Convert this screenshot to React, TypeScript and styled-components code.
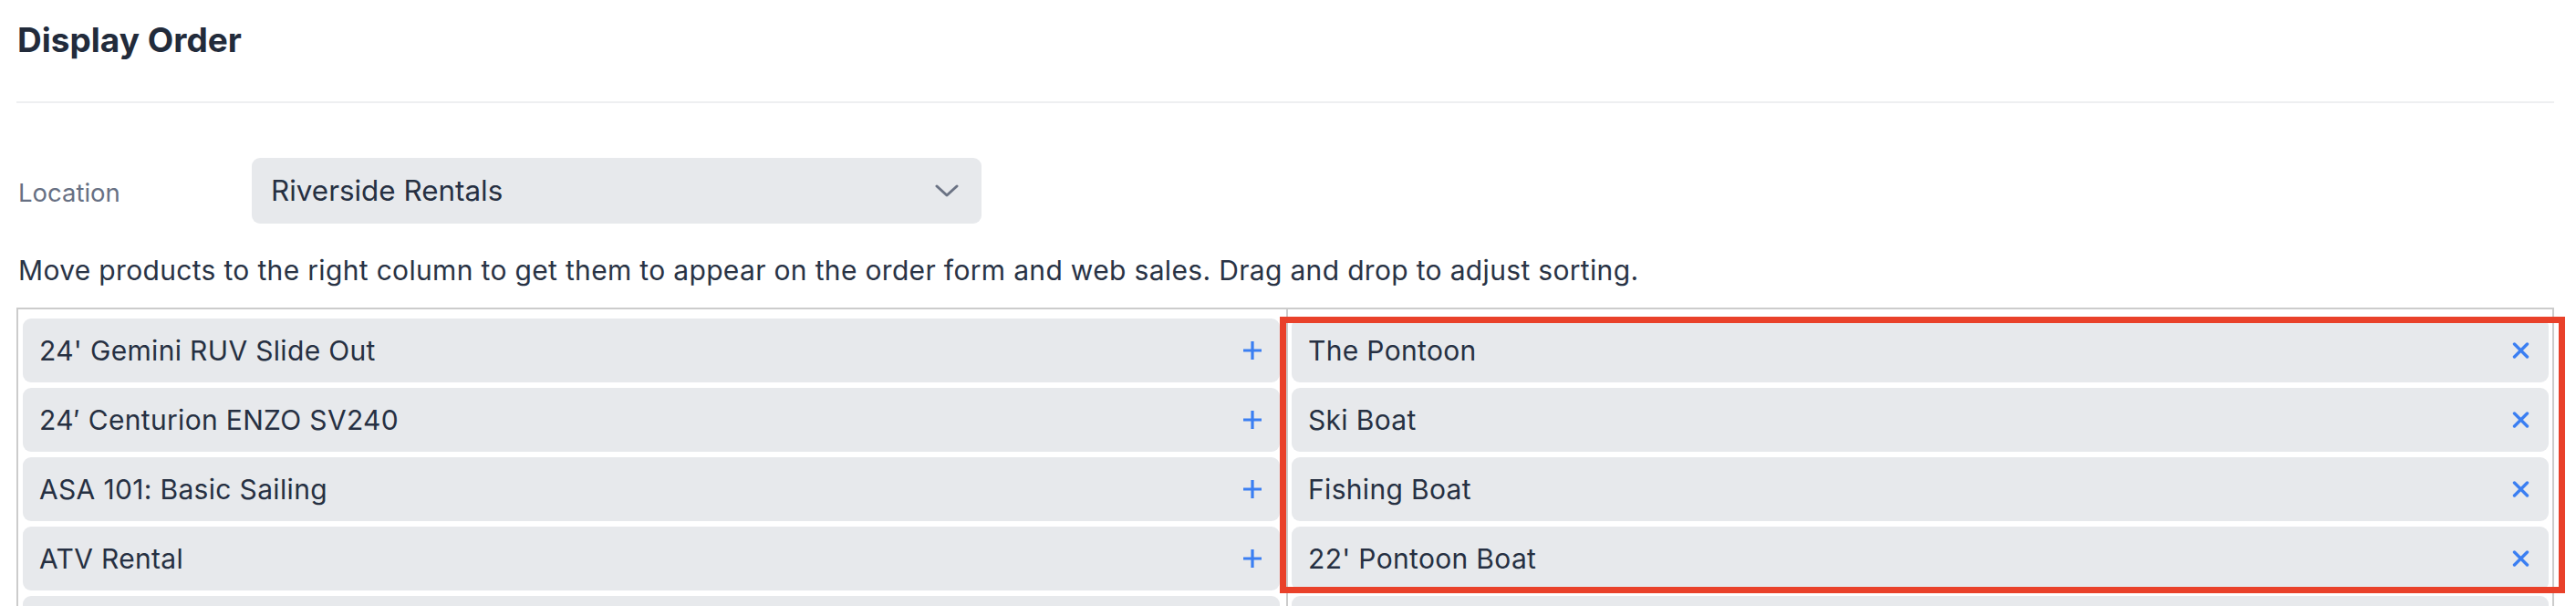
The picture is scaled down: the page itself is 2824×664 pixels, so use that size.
import React from "react";
import styled, { createGlobalStyle } from "styled-components";

const GlobalStyle = createGlobalStyle`
  * { box-sizing: border-box; }
  body {
    margin: 0;
    background: #fff;
    font-family: Inter, "Noto Sans", "Liberation Sans", sans-serif;
    color: #273142;
  }
`;

const Page = styled.div`
  padding: 22px 24px 0 18px;
`;

const Title = styled.h1`
  margin: 0 0 0 1px;
  font-size: 37px;
  line-height: 44px;
  font-weight: 700;
  color: #222b3b;
`;

const Divider = styled.hr`
  margin: 45px 0 0;
  border: none;
  height: 2px;
  background: #eeeff1;
`;

const FieldRow = styled.div`
  display: grid;
  grid-template-columns: 258px 800px;
  align-items: center;
  margin-top: 60px;
`;

const FieldLabel = styled.label`
  padding: 4px 0 0 2px;
  font-size: 27.5px;
  color: #677083;
`;

const Select = styled.div`
  display: flex;
  align-items: center;
  justify-content: space-between;
  height: 72px;
  padding: 0 25px 0 21px;
  border-radius: 9px;
  background: #e7e9ec;
  font-size: 31.4px;
  color: #263042;
`;

const Hint = styled.p`
  margin: 33px 0 0 2px;
  font-size: 30px;
  line-height: 36px;
  letter-spacing: 0.33px;
  color: #293345;
`;

const Board = styled.div`
  position: relative;
  display: grid;
  grid-template-columns: 1390px 1fr;
  margin-top: 23px;
  border: 2px solid #cccccc;
  border-bottom: none;
`;

const Column = styled.div<{ $side: "left" | "right" }>`
  position: relative;
  display: flex;
  flex-direction: column;
  gap: 6px;
  padding: ${(p) => (p.$side === "left" ? "10px 7px 0 5px" : "10px 4px 0 4px")};
  border-left: ${(p) => (p.$side === "right" ? "2px solid #cccccc" : "none")};
`;

const Item = styled.div`
  display: flex;
  align-items: center;
  justify-content: space-between;
  flex: none;
  height: 70px;
  padding: 0 19px 0 18px;
  border-radius: 9px;
  background: #e7e9ec;
  font-size: 30px;
  line-height: 70px;
  letter-spacing: 0.33px;
  color: #263042;
`;

const ActionIcon = styled.svg`
  flex: none;
  color: #3b7ff2;
`;

const Highlight = styled.div`
  position: absolute;
  top: 8px;
  left: -9px;
  right: -14px;
  height: 303px;
  border: 7px solid #e9412a;
  pointer-events: none;
`;

const available = [
  "24' Gemini RUV Slide Out",
  "24\u2032 Centurion ENZO SV240",
  "ASA 101: Basic Sailing",
  "ATV Rental",
  "Bass Boat",
];

const selected = ["The Pontoon", "Ski Boat", "Fishing Boat", "22' Pontoon Boat", "Kayak"];

const Chevron = () => (
  <svg width="26" height="14" viewBox="0 0 26 14" fill="none">
    <path d="M2 2l11 10L24 2" stroke="#6b7384" strokeWidth="3" strokeLinecap="round" strokeLinejoin="round" />
  </svg>
);

const PlusIcon = () => (
  <ActionIcon width="22" height="22" viewBox="0 0 22 22" fill="none">
    <path d="M11 1v20M1 11h20" stroke="currentColor" strokeWidth="3.2" />
  </ActionIcon>
);

const CloseIcon = () => (
  <ActionIcon width="19" height="18" viewBox="0 0 19 18" fill="none" style={{ marginRight: 2 }}>
    <path d="M2.5 2l14 14M16.5 2l-14 14" stroke="currentColor" strokeWidth="3.4" strokeLinecap="round" />
  </ActionIcon>
);

const App: React.FC = () => {
  return (
    <>
      <GlobalStyle />
      <Page>
        <Title>Display Order</Title>
        <Divider />
        <FieldRow>
          <FieldLabel>Location</FieldLabel>
          <Select>
            <span>Riverside Rentals</span>
            <Chevron />
          </Select>
        </FieldRow>
        <Hint>
          Move products to the right column to get them to appear on the order form and web sales. Drag and drop to
          adjust sorting.
        </Hint>
        <Board>
          <Column $side="left">
            {available.map((name) => (
              <Item key={name}>
                <span>{name}</span>
                <PlusIcon />
              </Item>
            ))}
          </Column>
          <Column $side="right">
            {selected.map((name) => (
              <Item key={name}>
                <span>{name}</span>
                <CloseIcon />
              </Item>
            ))}
            {/* annotation frame round the chosen products */}
            <Highlight />
          </Column>
        </Board>
      </Page>
    </>
  );
};

export default App;
